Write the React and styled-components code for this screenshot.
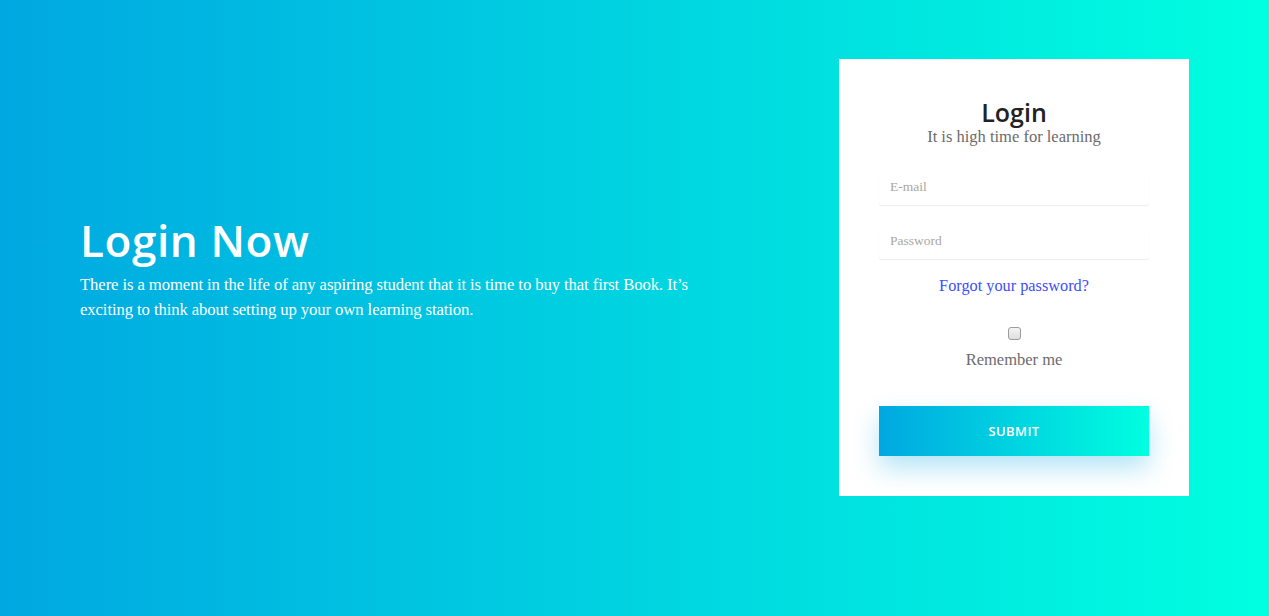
import React, { useState } from 'react';
import styled, { createGlobalStyle } from 'styled-components';

const GlobalStyle = createGlobalStyle`
  html, body {
    margin: 0;
    padding: 0;
  }
  body {
    font-family: "Liberation Serif", serif;
  }
  * {
    box-sizing: border-box;
  }
`;

const Page = styled.div`
  width: 100%;
  height: 616px;
  background: linear-gradient(to right, #00a8e1, #00ffe0);
  display: flex;
  justify-content: space-between;
  align-items: flex-start;
  padding: 59px 80px 0 80px;
`;

const Intro = styled.div`
  width: 620px;
  margin-top: 155px;
  color: #fff;
`;

const Heading = styled.h1`
  margin: 0;
  font-family: "Open Sans", sans-serif;
  font-weight: 600;
  font-size: 44px;
  line-height: 52px;
  letter-spacing: 0.6px;
`;

const Lead = styled.p`
  margin: 6px 0 0;
  font-family: "Liberation Serif", serif;
  font-size: 16.7px;
  line-height: 25px;
  letter-spacing: -0.1px;
`;

const Card = styled.form`
  width: 350px;
  background: #fff;
  padding: 38px 40px 40px;
  display: flex;
  flex-direction: column;
  align-items: center;
`;

const Title = styled.h2`
  margin: 0;
  font-family: "Open Sans", sans-serif;
  font-weight: 600;
  font-size: 25px;
  line-height: 30px;
  color: #222;
`;

const Subtitle = styled.div`
  font-size: 16.5px;
  line-height: 20px;
  color: #6b6b6b;
  margin-bottom: 22px;
`;

const Input = styled.input`
  width: 100%;
  height: 36px;
  border: none;
  padding: 0 11px;
  margin-bottom: 18px;
  font-family: "Liberation Serif", serif;
  font-size: 13.5px;
  color: #555;
  background: #fff;
  border-radius: 3px;
  box-shadow: 0 1px 1px rgba(0, 0, 0, 0.08);
  outline: none;

  &::placeholder {
    color: #aaa6a2;
  }
`;

const Forgot = styled.a`
  margin-top: -1px;
  font-size: 16.3px;
  line-height: 20px;
  color: #3d4ef8;
  text-decoration: none;
`;

const Check = styled.input`
  appearance: none;
  margin: 31px 0 0;
  width: 13px;
  height: 13px;
  border: 1px solid #9c9c9c;
  border-radius: 3px;
  background: linear-gradient(#f4f4f4, #dedede);
  cursor: pointer;

  &:checked {
    background: #3d4ef8;
    border-color: #3d4ef8;
  }
`;

const Remember = styled.label`
  margin-top: 10px;
  font-size: 16.5px;
  line-height: 20px;
  color: #6b6b6b;
`;

const Submit = styled.button`
  margin-top: 36px;
  width: 270px;
  height: 50px;
  border: none;
  background: linear-gradient(to right, #00a8e1, #00ffe0);
  color: #fff;
  font-family: "Open Sans", sans-serif;
  font-weight: 600;
  font-size: 13px;
  letter-spacing: 0.4px;
  box-shadow: 0 12px 26px rgba(0, 168, 225, 0.3);
  cursor: pointer;
`;

export default function App() {
  const [remember, setRemember] = useState(false);

  return (
    <>
      <GlobalStyle />
      <Page>
        <Intro>
          <Heading>Login Now</Heading>
          <Lead>
            There is a moment in the life of any aspiring student that it is time to buy that first Book. It’s
            exciting to think about setting up your own learning station.
          </Lead>
        </Intro>
        <Card onSubmit={(e) => e.preventDefault()}>
          <Title>Login</Title>
          <Subtitle>It is high time for learning</Subtitle>
          <Input type="email" placeholder="E-mail" />
          <Input type="password" placeholder="Password" />
          <Forgot href="#">Forgot your password?</Forgot>
          <Check
            type="checkbox"
            id="remember"
            checked={remember}
            onChange={(e) => setRemember(e.target.checked)}
          />
          <Remember htmlFor="remember">Remember me</Remember>
          <Submit type="submit">SUBMIT</Submit>
        </Card>
      </Page>
    </>
  );
}
